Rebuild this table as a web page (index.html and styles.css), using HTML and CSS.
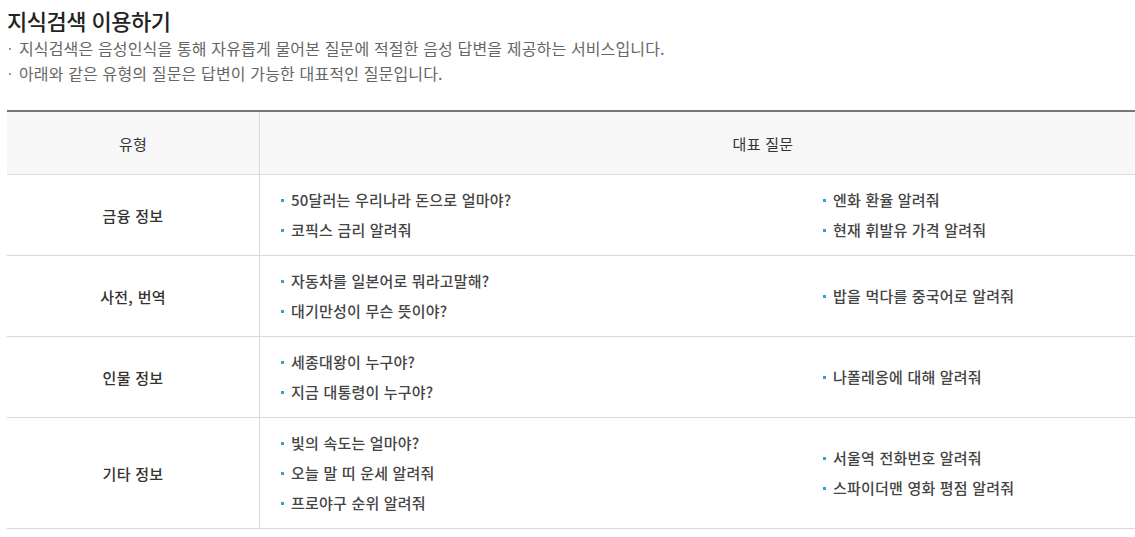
FILE: index.html
```html
<!DOCTYPE html>
<html lang="ko">
<head>
<meta charset="utf-8">
<title>지식검색 이용하기</title>
<link rel="stylesheet" href="styles.css">
</head>
<body>
<div class="page">
  <h2 class="title">지식검색 이용하기</h2>
  <ul class="intro">
    <li>지식검색은 음성인식을 통해 자유롭게 물어본 질문에 적절한 음성 답변을 제공하는 서비스입니다.</li>
    <li>아래와 같은 유형의 질문은 답변이 가능한 대표적인 질문입니다.</li>
  </ul>
  <div class="table">
    <div class="row head">
      <div class="type">유형</div>
      <div class="head-q">대표 질문</div>
    </div>
    <div class="row">
      <div class="type">금융 정보</div>
      <div class="qs">
        <ul class="list"><li>50달러는 우리나라 돈으로 얼마야?</li><li>코픽스 금리 알려줘</li></ul>
        <ul class="list"><li>엔화 환율 알려줘</li><li>현재 휘발유 가격 알려줘</li></ul>
      </div>
    </div>
    <div class="row">
      <div class="type">사전, 번역</div>
      <div class="qs">
        <ul class="list"><li>자동차를 일본어로 뭐라고말해?</li><li>대기만성이 무슨 뜻이야?</li></ul>
        <ul class="list"><li>밥을 먹다를 중국어로 알려줘</li></ul>
      </div>
    </div>
    <div class="row">
      <div class="type">인물 정보</div>
      <div class="qs">
        <ul class="list"><li>세종대왕이 누구야?</li><li>지금 대통령이 누구야?</li></ul>
        <ul class="list"><li>나폴레옹에 대해 알려줘</li></ul>
      </div>
    </div>
    <div class="row">
      <div class="type">기타 정보</div>
      <div class="qs">
        <ul class="list"><li>빛의 속도는 얼마야?</li><li>오늘 말 띠 운세 알려줘</li><li>프로야구 순위 알려줘</li></ul>
        <ul class="list"><li>서울역 전화번호 알려줘</li><li>스파이더맨 영화 평점 알려줘</li></ul>
      </div>
    </div>
  </div>
</div>
</body>
</html>
```

FILE: styles.css
```css
html, body {
  margin: 0;
  padding: 0;
  background: #fff;
  overflow: hidden;
}
body {
  font-family: "Noto Sans CJK KR", "Noto Sans", sans-serif;
  color: #333;
}
.page {
  width: 1128px;
  padding: 6px 0 0 7px;
}
.title {
  margin: 0;
  font-size: 22px;
  line-height: 28px;
  font-weight: 500;
  color: #222;
  letter-spacing: -0.5px;
}
.intro {
  list-style: none;
  margin: 2px 0 0 0;
  padding: 0;
  font-size: 16px;
  line-height: 25px;
  color: #666;
  letter-spacing: 0.15px;
}
.intro li {
  position: relative;
  padding-left: 12px;
}
.intro li::before {
  content: "";
  position: absolute;
  left: 2px;
  top: 12px;
  width: 2px;
  height: 2px;
  background: #999;
}
.table {
  margin-top: 24px;
  width: 1260px;
  border-top: 2px solid #777;
}
.row {
  display: grid;
  grid-template-columns: 253px 1006px;
  border-bottom: 1px solid #d9d9d9;
}
.row.head {
  background: #f7f7f7;
  height: 62px;
}
.type {
  border-right: 1px solid #d9d9d9;
  display: flex;
  align-items: center;
  justify-content: center;
  font-size: 15px;
  color: #333;
  font-weight: 500;
  letter-spacing: 0.3px;
}
.head .type {
  font-weight: 400;
}
.head-q {
  display: flex;
  align-items: center;
  justify-content: center;
  font-size: 15px;
  font-weight: 400;
  color: #333;
  letter-spacing: 0.3px;
}
.qs {
  display: grid;
  grid-template-columns: 542px 1fr;
  padding: 10px 0 10px 21px;
  align-items: center;
}
.list {
  list-style: none;
  margin: 0;
  padding: 0;
  font-size: 15px;
  line-height: 30px;
  color: #444;
  font-weight: 500;
  letter-spacing: 0.2px;
}
.list li {
  position: relative;
  padding-left: 10px;
}
.list li::before {
  content: "";
  position: absolute;
  left: 0;
  top: 14px;
  width: 3px;
  height: 3px;
  background: #3a9fd1;
}
```
